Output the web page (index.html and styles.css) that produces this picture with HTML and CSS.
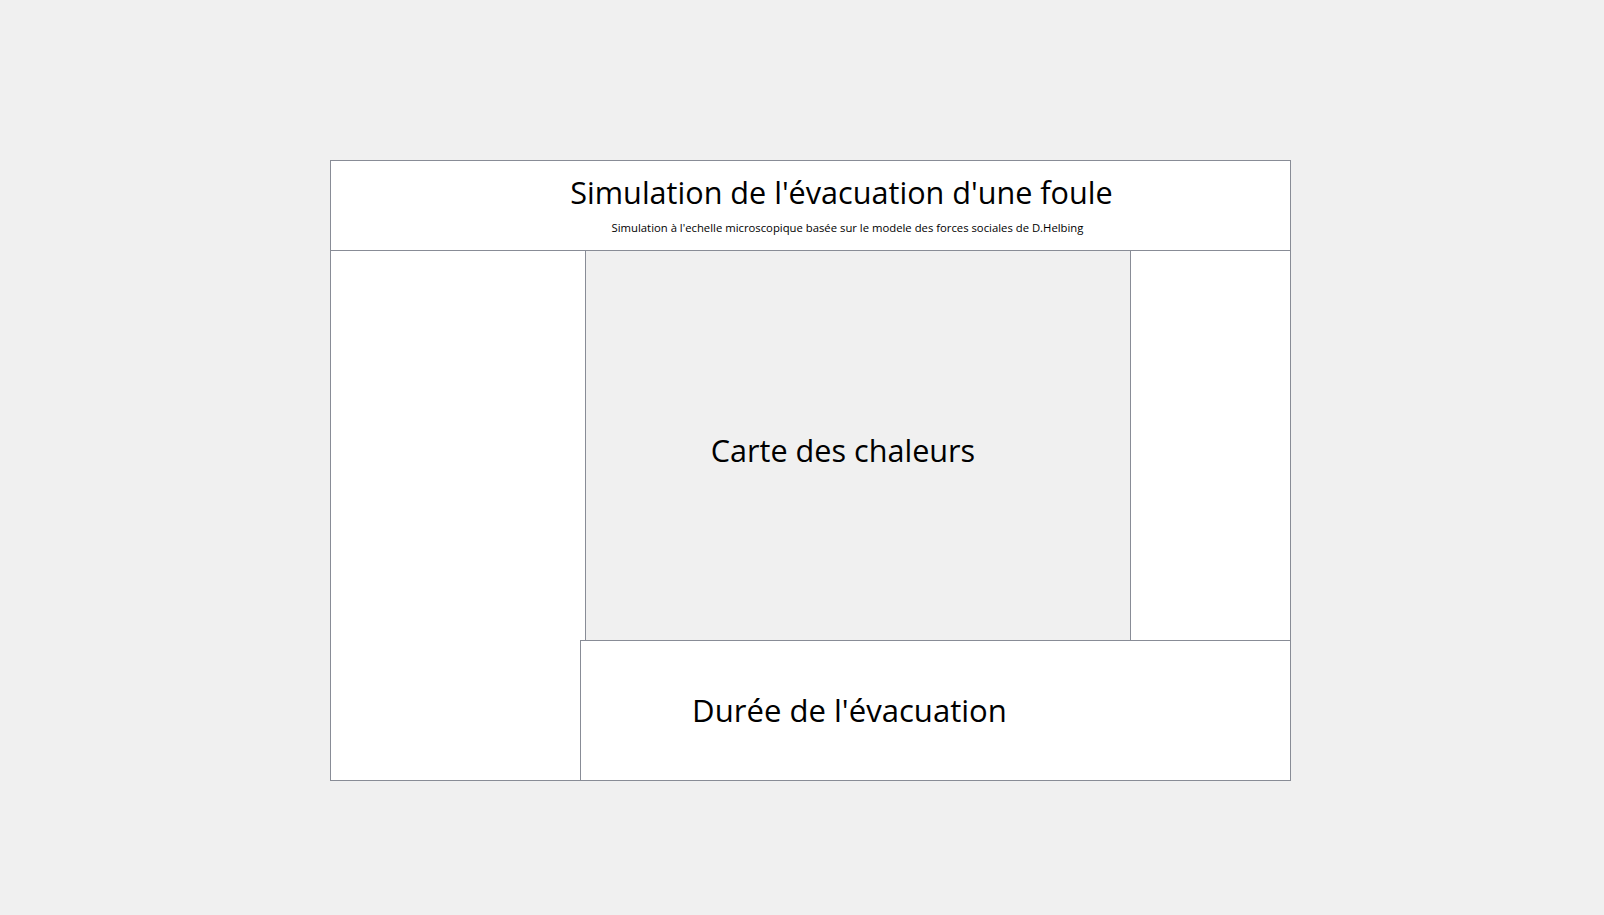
FILE: index.html
```html
<!DOCTYPE html>
<html lang="fr">
<head>
<meta charset="utf-8">
<title>Simulation de l'évacuation d'une foule</title>
<link rel="stylesheet" href="styles.css">
</head>
<body>
<div class="window">
  <header class="header">
    <h1 class="title">Simulation de l'évacuation d'une foule</h1>
    <p class="subtitle">Simulation à l'echelle microscopique basée sur le modele des forces sociales de D.Helbing</p>
  </header>
  <main class="main">
    <div class="row-top">
      <div class="side-left"></div>
      <section class="heatmap"><span class="panel-label">Carte des chaleurs</span></section>
      <div class="side-right"></div>
    </div>
    <div class="row-bottom">
      <div class="side-left-bottom"></div>
      <section class="duration"><span class="panel-label panel-label-wide">Durée de l'évacuation</span></section>
    </div>
  </main>
</div>
</body>
</html>
```
FILE: styles.css
```css
html, body {
  margin: 0;
  padding: 0;
  background: #f0f0f0;
  font-family: "Open Sans", "Noto Sans", sans-serif;
  color: #000;
}
body {
  padding: 160px 0 0 330px;
  height: 915px;
  box-sizing: border-box;
  overflow: hidden;
}
.window {
  width: 959px;
  height: 619px;
  border: 1px solid #888c96;
  background: #fff;
  display: flex;
  flex-direction: column;
}
.header {
  height: 89px;
  border-bottom: 1px solid #888c96;
  display: flex;
  flex-direction: column;
  align-items: center;
  padding-left: 62px;
  box-sizing: content-box;
}
.title {
  margin: 13px 0 0 0;
  font-weight: 400;
  font-size: 30.6px;
  line-height: 36px;
}
.subtitle {
  margin: 10px 0 0 0;
  font-size: 11.3px;
  line-height: 16px;
  padding-left: 12px;
}
.main {
  flex: 1;
  display: flex;
  flex-direction: column;
}
.row-top {
  height: 389px;
  display: flex;
}
.side-left { width: 254px; }
.heatmap {
  width: 546px;
  border-left: 1px solid #888c96;
  border-right: 1px solid #888c96;
  background: #f0f0f0;
  display: flex;
  align-items: center;
  justify-content: center;
  padding: 8px 30px 0 0;
  box-sizing: border-box;
}
.side-right { flex: 1; }
.row-bottom {
  flex: 1;
  display: flex;
}
.side-left-bottom { width: 249px; }
.duration {
  flex: 1;
  border-left: 1px solid #888c96;
  border-top: 1px solid #888c96;
  display: flex;
  align-items: center;
  justify-content: center;
  padding: 0 172px 2px 0;
}
.panel-label {
  font-size: 30.6px;
  line-height: 40px;
}
.panel-label-wide {
  font-size: 31.1px;
}
```
